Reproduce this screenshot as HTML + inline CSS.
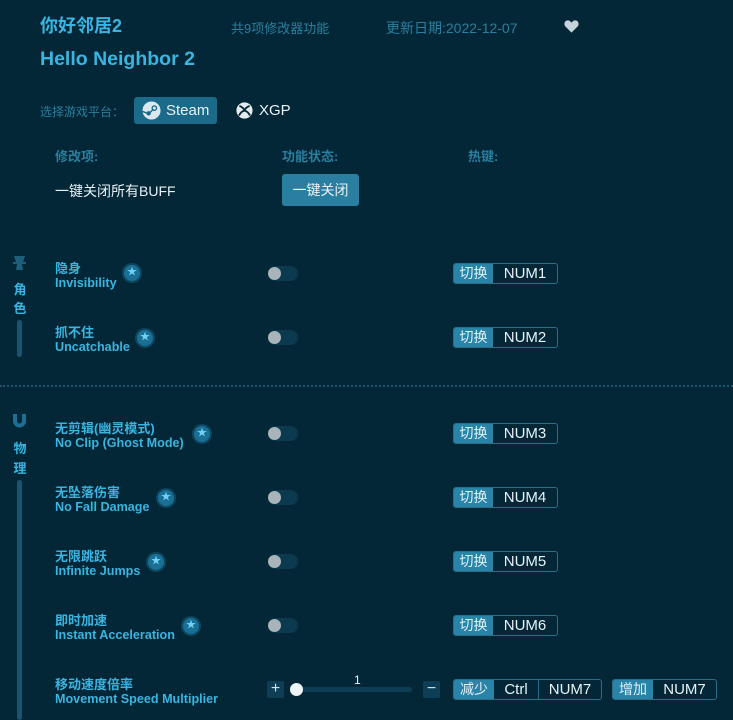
<!DOCTYPE html>
<html><head><meta charset="utf-8"><style>
*{margin:0;padding:0;box-sizing:border-box}
body{width:733px;height:709px;background:#032736;font-family:"Liberation Sans","Noto Sans CJK SC",sans-serif;position:relative;overflow:hidden;color:#fff}
.a{position:absolute;white-space:nowrap}
.cn{font-size:13px;color:#3ab4e0;font-weight:bold}
.en{font-size:12.6px;color:#3ab4e0;font-weight:bold}
.star{position:absolute;width:16px;height:16px;border-radius:50%;background:#1a6f94;box-shadow:0 0 0 2px #0e4660}
.star:after{content:"★";position:absolute;left:0;top:0;width:16px;text-align:center;font-size:10px;line-height:16px;color:#6fd0f5}
.tg{position:absolute;width:30px;height:15px;border-radius:8px;background:#0b3a4f}
.tg:after{content:"";position:absolute;left:0;top:1px;width:13px;height:13px;border-radius:50%;background:#a9b4ba}
.key{position:absolute;height:21px;border:1px solid #2a6f8a;border-radius:3px;display:flex;font-size:15px;overflow:hidden}
.key span{display:block;line-height:19px;text-align:center;color:#e8f2f6}
.key .h{background:#2a84a8;color:#dff0f7;font-size:14px}
.key .b{border-left:1px solid #2a6f8a}
.side{font-size:13px;color:#3ab4e0;font-weight:bold;width:40px;text-align:center}
</style></head><body>
<div class="a" style="left:40px;top:12px;font-size:18px;font-weight:bold;color:#3ab4e0">你好邻居2</div>
<div class="a" style="left:231px;top:18px;font-size:13px;color:#2a7fa0">共9项修改器功能</div>
<div class="a" style="left:386px;top:18px;font-size:14px;color:#2a7fa0">更新日期:2022-12-07</div>
<svg class="a" style="left:564px;top:19px" width="15" height="14" viewBox="0 0 16 14"><path d="M8 14L1.5 7.5C-.5 5.5.5 1 4 1c2 0 3 1.3 4 2.5C9 2.3 10 1 12 1c3.5 0 4.5 4.5 2.5 6.5z" fill="#c5d3da"/></svg>
<div class="a" style="left:40px;top:48px;font-size:19.5px;font-weight:bold;color:#3ab4e0">Hello Neighbor 2</div>
<div class="a" style="left:40px;top:103px;font-size:12px;color:#2a7fa0">选择游戏平台：</div>
<div class="a" style="left:134px;top:97px;width:83px;height:27px;background:#1c6a8a;border-radius:3px"></div>
<svg class="a" style="left:142px;top:101px" width="19" height="19" viewBox="0 0 20 20"><circle cx="10" cy="10" r="9.5" fill="#dce8ee"/><circle cx="13" cy="7.5" r="3" fill="#1c6a8a"/><circle cx="13" cy="7.5" r="1.6" fill="#dce8ee"/><circle cx="7" cy="13" r="2.3" fill="#1c6a8a"/><path d="M0.5 11L7 13.5L12 8.5" stroke="#1c6a8a" stroke-width="1.5" fill="none"/></svg>
<div class="a" style="left:166px;top:102px;font-size:15px;color:#e8f2f6">Steam</div>
<svg class="a" style="left:236px;top:102px" width="17" height="17" viewBox="0 0 20 20"><circle cx="10" cy="10" r="9.5" fill="#e4ecf0"/><path d="M4 4.5Q8 6 10 9.5Q12 6 16 4.5M3.5 16Q6 11 10 10Q14 11 16.5 16" stroke="#032736" stroke-width="2.2" fill="none"/></svg>
<div class="a" style="left:259px;top:102px;font-size:15px;color:#e8f2f6">XGP</div>
<div class="a" style="left:55px;top:146px;font-size:13px;color:#2a7fa0;font-weight:bold">修改项:</div>
<div class="a" style="left:282px;top:146px;font-size:13px;color:#2a7fa0;font-weight:bold">功能状态:</div>
<div class="a" style="left:468px;top:146px;font-size:13px;color:#2a7fa0;font-weight:bold">热键:</div>
<div class="a" style="left:55px;top:181px;font-size:14px;color:#e8f2f6">一键关闭所有BUFF</div>
<div class="a" style="left:282px;top:174px;width:77px;height:32px;background:#2a7fa0;border-radius:3px;font-size:14px;line-height:32px;text-align:center;color:#e8f2f6">一键关闭</div>

<svg class="a" style="left:11px;top:255px" width="17" height="16" viewBox="0 0 17 16"><path d="M3 1h11l-2 6h3v2h-4l1 6H5l1-6H2V7h3z" fill="#1d5f7a"/></svg>
<div class="a side" style="left:0;top:280px;line-height:19px">角<br>色</div>
<div class="a" style="left:17px;top:320px;width:5px;height:37px;background:#1a5470;border-radius:3px"></div>
<div class="a" style="left:0;top:385px;width:733px;border-top:2px dotted #1a5470"></div>
<svg class="a" style="left:11px;top:413px" width="17" height="16" viewBox="0 0 17 16"><path d="M2 1v7a6.5 6.5 0 0013 0V1h-4v7a2.5 2.5 0 01-5 0V1z" fill="#1d6f94"/></svg>
<div class="a side" style="left:0;top:439px;line-height:20px">物<br>理</div>
<div class="a" style="left:17px;top:480px;width:5px;height:240px;background:#1a5470;border-radius:3px"></div>

<div class="a cn" style="left:55px;top:258px">隐身</div><div class="a en" style="left:55px;top:276px">Invisibility</div><div class="star" style="left:124px;top:265px"></div>
<div class="tg" style="left:268px;top:266px"></div>
<div class="key" style="left:453px;top:263px;width:105px"><span class="h" style="width:39px">切换</span><span style="flex:1">NUM1</span></div>

<div class="a cn" style="left:55px;top:322px">抓不住</div><div class="a en" style="left:55px;top:340px">Uncatchable</div><div class="star" style="left:137px;top:330px"></div>
<div class="tg" style="left:268px;top:330px"></div>
<div class="key" style="left:453px;top:327px;width:105px"><span class="h" style="width:39px">切换</span><span style="flex:1">NUM2</span></div>

<div class="a cn" style="left:55px;top:418px">无剪辑(幽灵模式)</div><div class="a en" style="left:55px;top:436px">No Clip (Ghost Mode)</div><div class="star" style="left:194px;top:426px"></div>
<div class="tg" style="left:268px;top:426px"></div>
<div class="key" style="left:453px;top:423px;width:105px"><span class="h" style="width:39px">切换</span><span style="flex:1">NUM3</span></div>

<div class="a cn" style="left:55px;top:482px">无坠落伤害</div><div class="a en" style="left:55px;top:500px">No Fall Damage</div><div class="star" style="left:158px;top:490px"></div>
<div class="tg" style="left:268px;top:490px"></div>
<div class="key" style="left:453px;top:487px;width:105px"><span class="h" style="width:39px">切换</span><span style="flex:1">NUM4</span></div>

<div class="a cn" style="left:55px;top:546px">无限跳跃</div><div class="a en" style="left:55px;top:564px">Infinite Jumps</div><div class="star" style="left:148px;top:554px"></div>
<div class="tg" style="left:268px;top:554px"></div>
<div class="key" style="left:453px;top:551px;width:105px"><span class="h" style="width:39px">切换</span><span style="flex:1">NUM5</span></div>

<div class="a cn" style="left:55px;top:610px">即时加速</div><div class="a en" style="left:55px;top:628px">Instant Acceleration</div><div class="star" style="left:183px;top:618px"></div>
<div class="tg" style="left:268px;top:618px"></div>
<div class="key" style="left:453px;top:615px;width:105px"><span class="h" style="width:39px">切换</span><span style="flex:1">NUM6</span></div>

<div class="a cn" style="left:55px;top:674px">移动速度倍率</div><div class="a en" style="left:55px;top:692px">Movement Speed Multiplier</div>
<div class="a" style="left:267px;top:681px;width:17px;height:17px;background:#0e3e55;border-radius:2px;color:#cfe2ea;font-size:16px;line-height:16px;text-align:center">+</div>
<div class="a" style="left:296px;top:687px;width:116px;height:5px;background:#0e3e55;border-radius:3px"></div>
<div class="a" style="left:290px;top:683px;width:13px;height:13px;border-radius:50%;background:#eef3f5"></div>
<div class="a" style="left:354px;top:673px;font-size:12px;color:#e8f2f6">1</div>
<div class="a" style="left:423px;top:681px;width:17px;height:17px;background:#0e3e55;border-radius:2px;color:#cfe2ea;font-size:16px;line-height:15px;text-align:center">−</div>
<div class="key" style="left:453px;top:679px;width:149px"><span class="h" style="width:40px">减少</span><span style="width:44px">Ctrl</span><span class="b" style="flex:1">NUM7</span></div>
<div class="key" style="left:612px;top:679px;width:105px"><span class="h" style="width:40px">增加</span><span style="flex:1">NUM7</span></div>
</body></html>
